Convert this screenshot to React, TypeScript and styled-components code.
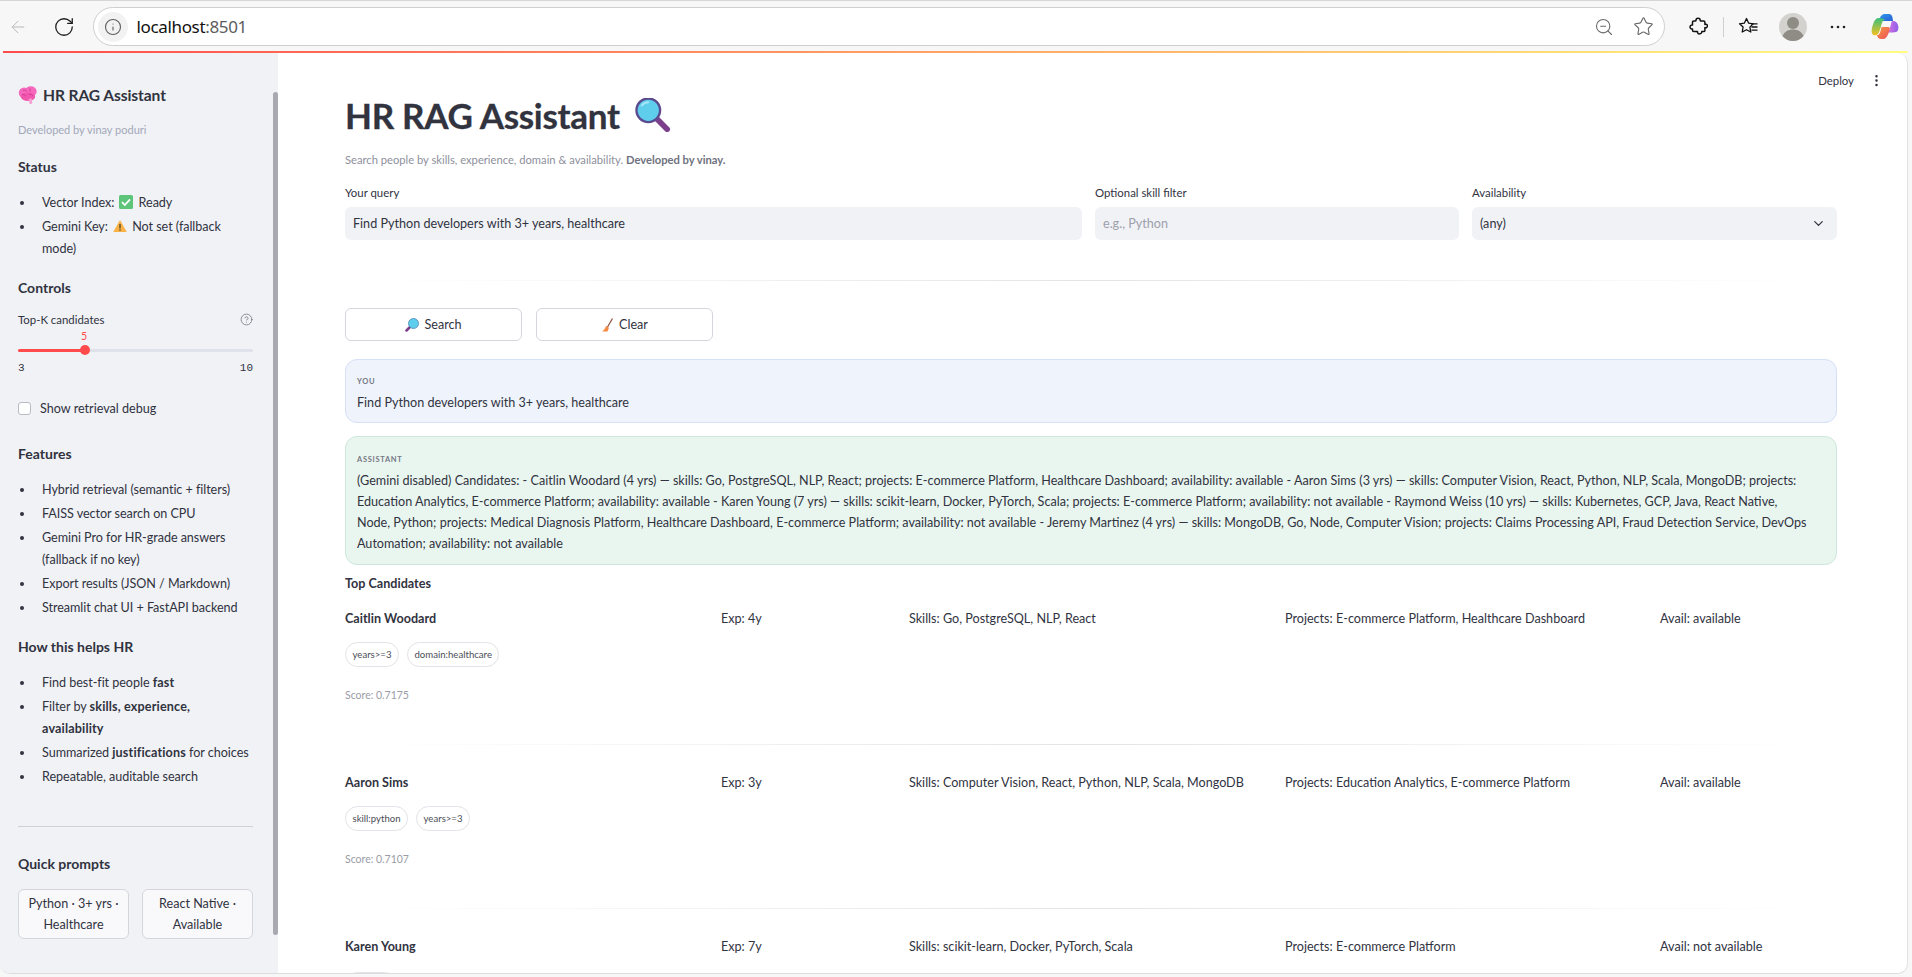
import React from 'react';
import styled, { createGlobalStyle } from 'styled-components';
import { ArrowLeft, ChevronDown, CircleHelp, EllipsisVertical, Info, RotateCw, Star, ZoomOut } from 'lucide-react';

const GlobalStyle = createGlobalStyle`
  html, body {
    margin: 0;
    padding: 0;
    height: 100%;
    overflow: hidden;
  }
  * {
    box-sizing: border-box;
  }
  body {
    font-family: Lato, "Noto Sans", sans-serif;
    color: #31333f;
    background: #f7f7f7;
  }
`;

const Screen = styled.div`
  width: 1912px;
  height: 977px;
  display: flex;
  flex-direction: column;
  background: #f7f7f7;
  overflow: hidden;
`;

const BrowserBar = styled.div`
  height: 51px;
  flex: none;
  display: flex;
  align-items: center;
  padding: 1px 12px 0 8px;
  border-top: 1px solid #d6d6d6;
`;

const BackButton = styled.div`
  width: 20px;
  height: 20px;
  margin-right: 25px;
  display: flex;
  color: #b9b9b9;
`;

const ReloadButton = styled.div`
  width: 22px;
  height: 22px;
  margin-right: 18px;
  display: flex;
  color: #1c1c1c;
`;

const AddressBar = styled.div`
  width: 1572px;
  height: 39px;
  flex: none;
  display: flex;
  align-items: center;
  background: #fff;
  border: 1.5px solid #cfcfcf;
  border-radius: 20px;
  padding: 0 10px 0 3.5px;
`;

const InfoBubble = styled.div`
  width: 30px;
  height: 30px;
  border-radius: 50%;
  background: #f2f2f2;
  display: flex;
  align-items: center;
  justify-content: center;
  color: #5f5f5f;
`;

const UrlText = styled.div`
  margin-left: 9px;
  font-family: "Noto Sans", sans-serif;
  font-size: 17px;
  letter-spacing: -0.35px;
  color: #111;
  flex: 1;
`;

const UrlPort = styled.span`
  color: #5c5c5c;
`;

const AddressIcon = styled.div<{ $gap: number }>`
  display: flex;
  margin-left: ${(p) => p.$gap}px;
  color: #6a6a6a;
`;

const ToolbarIcon = styled.div<{ $left: number; $size: number }>`
  width: ${(p) => p.$size}px;
  height: 28px;
  margin-left: ${(p) => p.$left}px;
  flex: none;
  display: flex;
  align-items: center;
  justify-content: center;
`;

const ToolbarDivider = styled.div`
  width: 1px;
  height: 20px;
  margin-left: 15px;
  background: #cfcfcf;
`;

const Gradient = styled.div`
  height: 2px;
  flex: none;
  margin: 0 4px 0 3px;
  background: linear-gradient(90deg, #ff4b4b, #fffd80);
  border-radius: 2px 10px 0 0;
`;

const AppWindow = styled.div`
  flex: 1;
  min-height: 0;
  margin: 0 4px 3px 0;
  display: flex;
  background: #fff;
  border-radius: 0 10px 10px 10px;
  overflow: hidden;
  border-right: 1px solid #e3e3e3;
  border-bottom: 1px solid #dcdcdc;
`;

const Sidebar = styled.aside`
  width: 278px;
  flex: none;
  position: relative;
  background: #f0f2f6;
  padding: 31px 25px 0 18px;
  overflow: hidden;
`;

const ScrollThumb = styled.div`
  position: absolute;
  top: 39px;
  right: 0;
  width: 5px;
  height: 843px;
  background: #a9a9b1;
  border-radius: 3px;
`;

const SideTitle = styled.div`
  display: flex;
  align-items: center;
  gap: 5px;
  height: 22px;
  font-size: 15.6px;
  font-weight: 700;
  letter-spacing: -0.1px;
`;

const Muted = styled.div`
  margin-top: 16px;
  height: 16px;
  line-height: 16px;
  font-size: 11px;
  color: #a3a8b8;
`;

const SideHeading = styled.div<{ $top: number }>`
  margin-top: ${(p) => p.$top}px;
  height: 20px;
  line-height: 20px;
  font-size: 14px;
  font-weight: 700;
`;

const BulletList = styled.ul<{ $top: number }>`
  list-style: none;
  margin: ${(p) => p.$top}px 0 0;
  padding: 0;
  display: flex;
  flex-direction: column;
  gap: 2px;
`;

const Bullet = styled.li`
  position: relative;
  padding-left: 24px;
  font-size: 12.6px;
  line-height: 22px;
  letter-spacing: -0.05px;
  &::before {
    content: '';
    position: absolute;
    left: 2px;
    top: 9px;
    width: 4px;
    height: 4px;
    border-radius: 50%;
    background: #31333f;
  }
  b {
    font-weight: 700;
    letter-spacing: 0.15px;
  }
`;

const InlineEmoji = styled.svg`
  width: 14px;
  height: 14px;
  margin: 0 2px;
  vertical-align: -2px;
`;

const SliderLabelRow = styled.div`
  margin-top: 13px;
  height: 16px;
  display: flex;
  align-items: center;
  justify-content: space-between;
  font-size: 11.4px;
  color: #31333f;
`;

const HelpIcon = styled.div`
  display: flex;
  color: #6d6f78;
`;

const SliderValue = styled.div`
  margin-top: 3px;
  padding-left: 63px;
  height: 13px;
  line-height: 13px;
  font-size: 10.5px;
  color: #ff4b4b;
`;

const SliderTrack = styled.div`
  position: relative;
  margin-top: 6px;
  height: 3px;
  border-radius: 2px;
  background: #dfe2ea;
`;

const SliderFill = styled.div`
  width: 67px;
  height: 3px;
  border-radius: 2px;
  background: #ff4b4b;
`;

const SliderThumb = styled.div`
  position: absolute;
  left: 62px;
  top: -4px;
  width: 10px;
  height: 10px;
  border-radius: 50%;
  background: #ff4b4b;
`;

const SliderRange = styled.div`
  margin-top: 9px;
  height: 14px;
  line-height: 14px;
  display: flex;
  justify-content: space-between;
  font-family: "Liberation Mono", monospace;
  font-size: 11px;
  color: #31333f;
`;

const CheckRow = styled.div`
  margin-top: 26px;
  height: 14px;
  display: flex;
  align-items: center;
  gap: 9px;
  font-size: 12.6px;
`;

const CheckBox = styled.div`
  width: 13px;
  height: 13px;
  background: #fff;
  border: 1px solid #b9bbc3;
  border-radius: 3px;
`;

const SideRule = styled.hr`
  margin: 38px 0 0;
  border: 0;
  border-top: 1px solid #cfd1d6;
`;

const QuickGrid = styled.div`
  margin-top: 15px;
  display: grid;
  grid-template-columns: 1fr 1fr;
  gap: 13px;
`;

const QuickButton = styled.div`
  height: 50px;
  padding: 0 6px;
  display: flex;
  align-items: center;
  justify-content: center;
  text-align: center;
  font-size: 12.6px;
  line-height: 21px;
  background: #f9f9fb;
  border: 1px solid #d5d6dc;
  border-radius: 6px;
`;

const Main = styled.main`
  flex: 1;
  min-width: 0;
  position: relative;
  padding: 0 70px 0 67px;
  overflow: hidden;
`;

const DeployBar = styled.div`
  position: absolute;
  top: 20px;
  right: 23px;
  display: flex;
  align-items: center;
  gap: 15px;
  font-size: 11.4px;
`;

const Title = styled.h1`
  margin: 40px 0 0;
  height: 44px;
  display: flex;
  align-items: center;
  gap: 14px;
  font-size: 35px;
  font-weight: 700;
  letter-spacing: -0.3px;
  -webkit-text-stroke: 0.3px #31333f;
`;

const Subtitle = styled.p`
  margin: 15px 0 0;
  height: 16px;
  line-height: 16px;
  font-size: 11.2px;
  color: #8d909c;
  b {
    color: #6f727e;
    font-weight: 700;
  }
`;

const FilterGrid = styled.div`
  margin-top: 17px;
  display: grid;
  grid-template-columns: 737px 364px 1fr;
  gap: 13px;
`;

const Field = styled.div`
  display: flex;
  flex-direction: column;
  gap: 6px;
`;

const FieldLabel = styled.label`
  height: 16px;
  line-height: 16px;
  font-size: 11.4px;
`;

const FieldBox = styled.div<{ $placeholder?: boolean }>`
  height: 33px;
  padding: 0 11px 0 8px;
  display: flex;
  align-items: center;
  justify-content: space-between;
  background: #f0f2f6;
  border-radius: 6px;
  font-size: 12.6px;
  color: ${(p) => (p.$placeholder ? '#9da0ab' : '#31333f')};
`;

const Rule = styled.hr<{ $top: number; $bottom: number }>`
  margin: ${(p) => p.$top}px 0 ${(p) => p.$bottom}px;
  height: 1px;
  border: 0;
  background: linear-gradient(90deg, transparent 2%, #e4e4e8 50%, transparent 98%);
`;

const ActionRow = styled.div`
  display: flex;
  gap: 14px;
`;

const ActionButton = styled.div`
  width: 177px;
  height: 33px;
  display: flex;
  align-items: center;
  justify-content: center;
  gap: 5px;
  border: 1px solid #d5d6dc;
  border-radius: 6px;
  font-size: 12.6px;
`;

const Bubble = styled.section<{ $assistant?: boolean }>`
  margin-top: ${(p) => (p.$assistant ? 13 : 18)}px;
  padding: ${(p) => (p.$assistant ? '16px 11px 10px' : '15px 11px 9px')};
  border-radius: 12px;
  background: ${(p) => (p.$assistant ? '#e9f6ef' : '#eef3fc')};
  border: 1px solid ${(p) => (p.$assistant ? '#cde8da' : '#d5e1f7')};
  font-size: 12.6px;
  line-height: 21px;
`;

const BubbleRole = styled.div`
  height: 14px;
  line-height: 14px;
  margin-bottom: 3px;
  font-size: 7.5px;
  font-weight: 700;
  letter-spacing: 0.7px;
  color: #757884;
`;

const BubbleLine = styled.span`
  display: block;
  white-space: nowrap;
`;

const CandidatesTitle = styled.div`
  margin-top: 9px;
  height: 20px;
  line-height: 20px;
  font-size: 12.6px;
  font-weight: 700;
`;

const CandidateRow = styled.div<{ $first: boolean }>`
  margin-top: ${(p) => (p.$first ? 15 : 28)}px;
  display: grid;
  grid-template-columns: 360fr 172fr 360fr 359fr 177fr;
  gap: 16px;
  font-size: 12.6px;
  line-height: 20px;
`;

const CandidateName = styled.div`
  font-weight: 700;
`;

const ChipRow = styled.div`
  margin-top: 13px;
  display: flex;
  gap: 8px;
`;

const Chip = styled.div`
  height: 25px;
  padding: 0 6.5px;
  display: flex;
  align-items: center;
  border: 1px solid #e2e3e8;
  border-radius: 13px;
  font-size: 9.6px;
  color: #4b4d58;
`;

// third candidate's chip only peeks in above the bottom edge of the window
const ClippedChip = styled(Chip)`
  width: 52px;
  margin-top: 2px;
`;

const Score = styled.div`
  margin-top: 20px;
  height: 16px;
  line-height: 16px;
  font-size: 10.5px;
  color: #9a9ca7;
`;

const Brain = () => (
  <svg width="20" height="20" viewBox="0 0 18 18">
    <ellipse cx="5.500" cy="7" rx="4.800" ry="4.800" fill="#f668bb" />
    <ellipse cx="11.500" cy="5.800" rx="5.300" ry="4.600" fill="#f668bb" />
    <ellipse cx="9" cy="10.500" rx="6.500" ry="3.800" fill="#f157ad" />
    <path d="M9.500 12.500l1 4.500c.9.300 1.800.1 2.400-.5l-.6-4.500z" fill="#f9a0d3" />
    <path d="M4.500 5c1.500-.8 3-.2 3.500 1M11 3c-.8 1.200-.4 2.400.7 3M3.500 9c1.300-.7 2.700-.3 3.500.8M9.500 8.500c1.400-.6 3 0 3.800 1.200" fill="none" stroke="#c9358c" strokeWidth="0.700" />
  </svg>
);

const CheckEmoji = () => (
  <InlineEmoji viewBox="0 0 14 14">
    <rect width="14" height="14" rx="1.500" fill="#5dc47a" />
    <path d="M3 7.200l2.800 2.800L11 4.300" fill="none" stroke="#fff" strokeWidth="1.800" />
  </InlineEmoji>
);

const WarnEmoji = () => (
  <InlineEmoji viewBox="0 0 14 14">
    <path d="M7 1L13.800 13H.2z" fill="#f9b246" strokeLinejoin="round" />
    <rect x="6.300" y="5" width="1.400" height="4.500" fill="#5a4a2f" />
    <rect x="6.300" y="10.300" width="1.400" height="1.400" fill="#5a4a2f" />
  </InlineEmoji>
);

const TitleGlass = () => (
  <svg width="38" height="34" viewBox="0 0 40 36">
    <path d="M24 22l11 11" stroke="#7b3f8c" strokeWidth="6" strokeLinecap="round" />
    <circle cx="15" cy="13" r="12.500" fill="#5fcdec" stroke="#5a4a8f" strokeWidth="2.500" />
    <path d="M8 8c2-2.500 4-3.500 7-3.500" fill="none" stroke="#a6e6f6" strokeWidth="2" strokeLinecap="round" />
  </svg>
);

const SmallGlass = () => (
  <svg width="14" height="14" viewBox="0 0 14 14">
    <path d="M5 9l-3.500 3.500" stroke="#7b3f8c" strokeWidth="2.500" strokeLinecap="round" />
    <circle cx="8.500" cy="5.500" r="5" fill="#5fcdec" stroke="#4c86b8" strokeWidth="0.800" />
  </svg>
);

const Broom = () => (
  <svg width="13" height="14" viewBox="0 0 13 14">
    <path d="M11.500 .5L6.500 9" stroke="#8a4b38" strokeWidth="1.200" />
    <path d="M5 8l3 1.800L6.500 13.500 1 13.500C3 12.500 4 10.500 5 8z" fill="#f58a45" />
  </svg>
);

const PuzzleIcon = () => (
  <svg width="19" height="19" viewBox="0 0 19 19" fill="none" stroke="#111" strokeWidth="1.500" strokeLinejoin="round">
    <path d="M7 3.200c0-2.600 4.200-2.600 4.200 0 0 .5.300.8.800.8h2.600c.8 0 1.300.5 1.300 1.300v2.300c1.900-.8 2.900 .6 2.400 2-.4 1.200-1.500 1.400-2.400 1v2.800c0 .7-.5 1.200-1.300 1.200h-1.800c.4 2.400-3.500 3.300-4.300 .9-.2-.5 0-.9 0-.9H4.800c-.8 0-1.300-.5-1.300-1.300v-1.300c-3.300.4-3.300-4.400 0-4V5.300C3.500 4.500 4 4 4.800 4h1.400c.5 0 .8-.3.800-.8z" />
  </svg>
);

const FavoritesIcon = () => (
  <svg width="21" height="20" viewBox="0 0 21 20" fill="none" stroke="#111" strokeWidth="1.300" strokeLinejoin="round">
    <path d="M8.500 1.500l2.200 4.700 4.500.6-3.300 3.300.9 4.900-4.300-2.300L4.200 15l.9-4.900L1.500 6.800l4.800-.6z" />
    <path d="M13 6.800h6.500M13.500 10h6M13.500 13.200h6" />
  </svg>
);

const ProfileIcon = () => (
  <svg width="28" height="28" viewBox="0 0 28 28">
    <circle cx="14" cy="14" r="14" fill="#d3d2ce" />
    <circle cx="14" cy="10" r="6" fill="#8f8b85" />
    <path d="M3.500 23c2-4.500 6-6.500 10.500-6.500S22.500 18.500 24.500 23c-2.500 3-6.500 5-10.500 5S6 26 3.500 23z" fill="#8f8b85" />
  </svg>
);

const DotsIcon = () => (
  <svg width="16" height="4" viewBox="0 0 16 4" fill="#222">
    <circle cx="2" cy="2" r="1.300" />
    <circle cx="8" cy="2" r="1.300" />
    <circle cx="14" cy="2" r="1.300" />
  </svg>
);

const CopilotIcon = () => (
  <svg width="28" height="27" viewBox="0 0 28 27">
    <defs>
      <linearGradient id="cpA" x1="0" y1="0" x2="1" y2="1">
        <stop offset="0" stopColor="#2d9be8" />
        <stop offset="1" stopColor="#2a5fd8" />
      </linearGradient>
      <linearGradient id="cpB" x1="0" y1="0" x2="0" y2="1">
        <stop offset="0" stopColor="#39c07a" />
        <stop offset="1" stopColor="#f5c021" />
      </linearGradient>
      <linearGradient id="cpC" x1="0" y1="0" x2="1" y2="1">
        <stop offset="0" stopColor="#f59a3a" />
        <stop offset="1" stopColor="#ee4f62" />
      </linearGradient>
      <linearGradient id="cpD" x1="0" y1="0" x2="1" y2="0">
        <stop offset="0" stopColor="#d66fe0" />
        <stop offset="1" stopColor="#8d5fe8" />
      </linearGradient>
    </defs>
    <path d="M8 8C8.800 4 10.500 1.500 13 1h5c2 0 3 1.500 3.500 3.500L22 8H12z" fill="url(#cpA)" />
    <path d="M8 5C5 5 3.500 7 2.500 10 1 14 0 18 1 20.500 2 22.500 5 23 7 21c1.500-2 2.500-6 3.500-9.500C11.200 9 12 7 14 6.500 12 5.500 10 5 8 5z" fill="url(#cpB)" />
    <path d="M21 8c3-.5 5 1 6 4 1 3.500 0 6.500-2 7-1.800.5-5 .5-8 .5 1.500-3 2.500-6.500 3-8.500.3-1.200.5-2.200 1-3z" fill="url(#cpD)" />
    <path d="M10.500 14h7c1.500 0 1.500 2 .8 4-1 3-2.300 7-5.300 8h-3c-2.200 0-3.500-1.500-4-4 2.500.5 3.500-3 4.500-8z" fill="url(#cpC)" />
  </svg>
);

const features = [
  'Hybrid retrieval (semantic + filters)',
  'FAISS vector search on CPU',
  'Gemini Pro for HR-grade answers (fallback if no key)',
  'Export results (JSON / Markdown)',
  'Streamlit chat UI + FastAPI backend',
];

const assistantLines = [
  '(Gemini disabled) Candidates: - Caitlin Woodard (4 yrs) — skills: Go, PostgreSQL, NLP, React; projects: E-commerce Platform, Healthcare Dashboard; availability: available - Aaron Sims (3 yrs) — skills: Computer Vision, React, Python, NLP, Scala, MongoDB; projects:',
  'Education Analytics, E-commerce Platform; availability: available - Karen Young (7 yrs) — skills: scikit-learn, Docker, PyTorch, Scala; projects: E-commerce Platform; availability: not available - Raymond Weiss (10 yrs) — skills: Kubernetes, GCP, Java, React Native,',
  'Node, Python; projects: Medical Diagnosis Platform, Healthcare Dashboard, E-commerce Platform; availability: not available - Jeremy Martinez (4 yrs) — skills: MongoDB, Go, Node, Computer Vision; projects: Claims Processing API, Fraud Detection Service, DevOps',
  'Automation; availability: not available',
];

const candidates = [
  {
    name: 'Caitlin Woodard',
    exp: 'Exp: 4y',
    skills: 'Skills: Go, PostgreSQL, NLP, React',
    projects: 'Projects: E-commerce Platform, Healthcare Dashboard',
    avail: 'Avail: available',
    chips: ['years>=3', 'domain:healthcare'],
    score: 'Score: 0.7175',
  },
  {
    name: 'Aaron Sims',
    exp: 'Exp: 3y',
    skills: 'Skills: Computer Vision, React, Python, NLP, Scala, MongoDB',
    projects: 'Projects: Education Analytics, E-commerce Platform',
    avail: 'Avail: available',
    chips: ['skill:python', 'years>=3'],
    score: 'Score: 0.7107',
  },
  {
    name: 'Karen Young',
    exp: 'Exp: 7y',
    skills: 'Skills: scikit-learn, Docker, PyTorch, Scala',
    projects: 'Projects: E-commerce Platform',
    avail: 'Avail: not available',
    chips: [],
    score: '',
  },
];

const App: React.FC = () => {
  return (
    <Screen>
      <GlobalStyle />
      <BrowserBar>
        <BackButton>
          <ArrowLeft size={20} strokeWidth={1.2} />
        </BackButton>
        <ReloadButton>
          <RotateCw size={22} strokeWidth={1.4} />
        </ReloadButton>
        <AddressBar>
          <InfoBubble>
            <Info size={18} strokeWidth={1.5} />
          </InfoBubble>
          <UrlText>
            localhost<UrlPort>:8501</UrlPort>
          </UrlText>
          <AddressIcon $gap={0}>
            <ZoomOut size={20} strokeWidth={1.3} />
          </AddressIcon>
          <AddressIcon $gap={19}>
            <Star size={21} strokeWidth={1.3} />
          </AddressIcon>
        </AddressBar>
        <ToolbarIcon $left={24} $size={19}>
          <PuzzleIcon />
        </ToolbarIcon>
        <ToolbarDivider />
        <ToolbarIcon $left={14} $size={21}>
          <FavoritesIcon />
        </ToolbarIcon>
        <ToolbarIcon $left={20} $size={28}>
          <ProfileIcon />
        </ToolbarIcon>
        <ToolbarIcon $left={23} $size={16}>
          <DotsIcon />
        </ToolbarIcon>
        <ToolbarIcon $left={25} $size={28}>
          <CopilotIcon />
        </ToolbarIcon>
      </BrowserBar>
      <Gradient />
      <AppWindow>
        <Sidebar>
          <ScrollThumb />
          <SideTitle>
            <Brain />
            HR RAG Assistant
          </SideTitle>
          <Muted>Developed by vinay poduri</Muted>
          <SideHeading $top={19}>Status</SideHeading>
          <BulletList $top={15}>
            <Bullet>
              Vector Index: <CheckEmoji /> Ready
            </Bullet>
            <Bullet>
              Gemini Key: <WarnEmoji /> Not set (fallback mode)
            </Bullet>
          </BulletList>
          <SideHeading $top={18}>Controls</SideHeading>
          <SliderLabelRow>
            Top-K candidates
            <HelpIcon>
              <CircleHelp size={13} strokeWidth={1.4} />
            </HelpIcon>
          </SliderLabelRow>
          <SliderValue>5</SliderValue>
          <SliderTrack>
            <SliderFill />
            <SliderThumb />
          </SliderTrack>
          <SliderRange>
            <span>3</span>
            <span>10</span>
          </SliderRange>
          <CheckRow>
            <CheckBox />
            Show retrieval debug
          </CheckRow>
          <SideHeading $top={29}>Features</SideHeading>
          <BulletList $top={15}>
            {features.map((item) => (
              <Bullet key={item}>{item}</Bullet>
            ))}
          </BulletList>
          <SideHeading $top={18}>How this helps HR</SideHeading>
          <BulletList $top={15}>
            <Bullet>
              Find best-fit people <b>fast</b>
            </Bullet>
            <Bullet>
              Filter by <b>skills, experience,</b>
              <br />
              <b>availability</b>
            </Bullet>
            <Bullet>
              Summarized <b>justifications</b> for choices
            </Bullet>
            <Bullet>Repeatable, auditable search</Bullet>
          </BulletList>
          <SideRule />
          <SideHeading $top={27}>Quick prompts</SideHeading>
          <QuickGrid>
            <QuickButton>Python · 3+ yrs · Healthcare</QuickButton>
            <QuickButton>React Native · Available</QuickButton>
          </QuickGrid>
        </Sidebar>
        <Main>
          <DeployBar>
            Deploy
            <EllipsisVertical size={15} strokeWidth={2} />
          </DeployBar>
          <Title>
            HR RAG Assistant
            <TitleGlass />
          </Title>
          <Subtitle>
            Search people by skills, experience, domain &amp; availability. <b>Developed by vinay.</b>
          </Subtitle>
          <FilterGrid>
            <Field>
              <FieldLabel>Your query</FieldLabel>
              <FieldBox>Find Python developers with 3+ years, healthcare</FieldBox>
            </Field>
            <Field>
              <FieldLabel>Optional skill filter</FieldLabel>
              <FieldBox $placeholder>e.g., Python</FieldBox>
            </Field>
            <Field>
              <FieldLabel>Availability</FieldLabel>
              <FieldBox>
                (any)
                <ChevronDown size={15} strokeWidth={2} />
              </FieldBox>
            </Field>
          </FilterGrid>
          <Rule $top={40} $bottom={27} />
          <ActionRow>
            <ActionButton>
              <SmallGlass />
              Search
            </ActionButton>
            <ActionButton>
              <Broom />
              Clear
            </ActionButton>
          </ActionRow>
          <Bubble>
            <BubbleRole>YOU</BubbleRole>
            Find Python developers with 3+ years, healthcare
          </Bubble>
          <Bubble $assistant>
            <BubbleRole>ASSISTANT</BubbleRole>
            {assistantLines.map((line) => (
              <BubbleLine key={line}>{line}</BubbleLine>
            ))}
          </Bubble>
          <CandidatesTitle>Top Candidates</CandidatesTitle>
          {candidates.map((c, i) => (
            <div key={c.name}>
              <CandidateRow $first={i === 0}>
                <CandidateName>{c.name}</CandidateName>
                <div>{c.exp}</div>
                <div>{c.skills}</div>
                <div>{c.projects}</div>
                <div>{c.avail}</div>
              </CandidateRow>
              {c.score !== '' ? (
                <>
                  <ChipRow>
                    {c.chips.map((chip) => (
                      <Chip key={chip}>{chip}</Chip>
                    ))}
                  </ChipRow>
                  <Score>{c.score}</Score>
                  <Rule $top={41} $bottom={0} />
                </>
              ) : (
                <ChipRow>
                  <ClippedChip />
                </ChipRow>
              )}
            </div>
          ))}
        </Main>
      </AppWindow>
    </Screen>
  );
};

export default App;
